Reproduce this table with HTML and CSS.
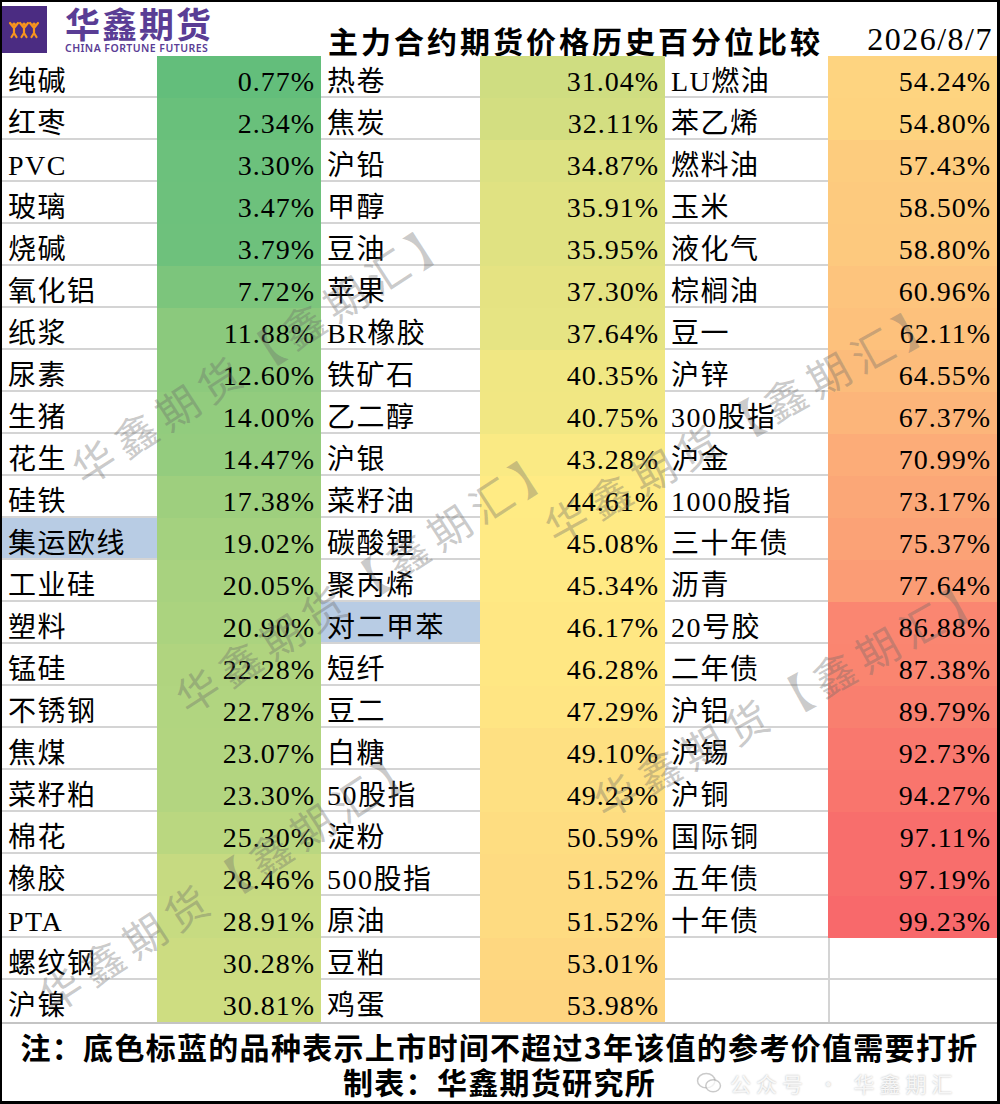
FILE: index.html
```html
<!DOCTYPE html>
<html lang="zh-CN">
<head>
<meta charset="utf-8">
<title>主力合约期货价格历史百分位比较</title>
<link rel="stylesheet" href="styles.css">
</head>
<body>
<div class="sheet">
  <header class="head">
    <div class="brand">
      <svg class="brand-mark" viewBox="0 0 45 47" width="45" height="47" aria-hidden="true">
        <rect width="45" height="47" fill="#4b2c82"/>
        <g fill="none" stroke="#f7941d" stroke-width="2.2" stroke-linecap="round" stroke-linejoin="round">
          <path d="M8 17 L12 22 L16 17 M12 22 L12 27 M12 27 L9.5 31 M12 27 L14.5 31"/>
          <path d="M18 17 L22 22 L26 17 M22 22 L22 27 M22 27 L19.5 31 M22 27 L24.5 31"/>
          <path d="M28 17 L32 22 L36 17 M32 22 L32 27 M32 27 L29.5 31 M32 27 L34.5 31"/>
        </g>
        <g fill="#f7941d">
          <circle cx="12" cy="18.2" r="1.8"/>
          <circle cx="22" cy="18.2" r="1.8"/>
          <circle cx="32" cy="18.2" r="1.8"/>
        </g>
      </svg>
      <div class="brand-text">
        <div class="brand-cn">华鑫期货</div>
        <div class="brand-en">CHINA FORTUNE FUTURES</div>
      </div>
    </div>
    <h1 class="title">主力合约期货价格历史百分位比较</h1>
    <div class="date">2026/8/7</div>
  </header>

  <div class="grid">
    <div class="name">纯碱</div><div class="val lo" style="--v:0.77">0.77%</div><div class="name">热卷</div><div class="val lo" style="--v:31.04">31.04%</div><div class="name">LU燃油</div><div class="val hi" style="--v:54.24">54.24%</div>
    <div class="name">红枣</div><div class="val lo" style="--v:2.34">2.34%</div><div class="name">焦炭</div><div class="val lo" style="--v:32.11">32.11%</div><div class="name">苯乙烯</div><div class="val hi" style="--v:54.80">54.80%</div>
    <div class="name">PVC</div><div class="val lo" style="--v:3.30">3.30%</div><div class="name">沪铅</div><div class="val lo" style="--v:34.87">34.87%</div><div class="name">燃料油</div><div class="val hi" style="--v:57.43">57.43%</div>
    <div class="name">玻璃</div><div class="val lo" style="--v:3.47">3.47%</div><div class="name">甲醇</div><div class="val lo" style="--v:35.91">35.91%</div><div class="name">玉米</div><div class="val hi" style="--v:58.50">58.50%</div>
    <div class="name">烧碱</div><div class="val lo" style="--v:3.79">3.79%</div><div class="name">豆油</div><div class="val lo" style="--v:35.95">35.95%</div><div class="name">液化气</div><div class="val hi" style="--v:58.80">58.80%</div>
    <div class="name">氧化铝</div><div class="val lo" style="--v:7.72">7.72%</div><div class="name">苹果</div><div class="val lo" style="--v:37.30">37.30%</div><div class="name">棕榈油</div><div class="val hi" style="--v:60.96">60.96%</div>
    <div class="name">纸浆</div><div class="val lo" style="--v:11.88">11.88%</div><div class="name">BR橡胶</div><div class="val lo" style="--v:37.64">37.64%</div><div class="name">豆一</div><div class="val hi" style="--v:62.11">62.11%</div>
    <div class="name">尿素</div><div class="val lo" style="--v:12.60">12.60%</div><div class="name">铁矿石</div><div class="val lo" style="--v:40.35">40.35%</div><div class="name">沪锌</div><div class="val hi" style="--v:64.55">64.55%</div>
    <div class="name">生猪</div><div class="val lo" style="--v:14.00">14.00%</div><div class="name">乙二醇</div><div class="val lo" style="--v:40.75">40.75%</div><div class="name">300股指</div><div class="val hi" style="--v:67.37">67.37%</div>
    <div class="name">花生</div><div class="val lo" style="--v:14.47">14.47%</div><div class="name">沪银</div><div class="val lo" style="--v:43.28">43.28%</div><div class="name">沪金</div><div class="val hi" style="--v:70.99">70.99%</div>
    <div class="name">硅铁</div><div class="val lo" style="--v:17.38">17.38%</div><div class="name">菜籽油</div><div class="val lo" style="--v:44.61">44.61%</div><div class="name">1000股指</div><div class="val hi" style="--v:73.17">73.17%</div>
    <div class="name new">集运欧线</div><div class="val lo" style="--v:19.02">19.02%</div><div class="name">碳酸锂</div><div class="val hi" style="--v:45.08">45.08%</div><div class="name">三十年债</div><div class="val hi" style="--v:75.37">75.37%</div>
    <div class="name">工业硅</div><div class="val lo" style="--v:20.05">20.05%</div><div class="name">聚丙烯</div><div class="val hi" style="--v:45.34">45.34%</div><div class="name">沥青</div><div class="val hi" style="--v:77.64">77.64%</div>
    <div class="name">塑料</div><div class="val lo" style="--v:20.90">20.90%</div><div class="name new">对二甲苯</div><div class="val hi" style="--v:46.17">46.17%</div><div class="name">20号胶</div><div class="val hi" style="--v:86.88">86.88%</div>
    <div class="name">锰硅</div><div class="val lo" style="--v:22.28">22.28%</div><div class="name">短纤</div><div class="val hi" style="--v:46.28">46.28%</div><div class="name">二年债</div><div class="val hi" style="--v:87.38">87.38%</div>
    <div class="name">不锈钢</div><div class="val lo" style="--v:22.78">22.78%</div><div class="name">豆二</div><div class="val hi" style="--v:47.29">47.29%</div><div class="name">沪铝</div><div class="val hi" style="--v:89.79">89.79%</div>
    <div class="name">焦煤</div><div class="val lo" style="--v:23.07">23.07%</div><div class="name">白糖</div><div class="val hi" style="--v:49.10">49.10%</div><div class="name">沪锡</div><div class="val hi" style="--v:92.73">92.73%</div>
    <div class="name">菜籽粕</div><div class="val lo" style="--v:23.30">23.30%</div><div class="name">50股指</div><div class="val hi" style="--v:49.23">49.23%</div><div class="name">沪铜</div><div class="val hi" style="--v:94.27">94.27%</div>
    <div class="name">棉花</div><div class="val lo" style="--v:25.30">25.30%</div><div class="name">淀粉</div><div class="val hi" style="--v:50.59">50.59%</div><div class="name">国际铜</div><div class="val hi" style="--v:97.11">97.11%</div>
    <div class="name">橡胶</div><div class="val lo" style="--v:28.46">28.46%</div><div class="name">500股指</div><div class="val hi" style="--v:51.52">51.52%</div><div class="name">五年债</div><div class="val hi" style="--v:97.19">97.19%</div>
    <div class="name">PTA</div><div class="val lo" style="--v:28.91">28.91%</div><div class="name">原油</div><div class="val hi" style="--v:51.52">51.52%</div><div class="name">十年债</div><div class="val hi" style="--v:99.23">99.23%</div>
    <div class="name">螺纹钢</div><div class="val lo" style="--v:30.28">30.28%</div><div class="name">豆粕</div><div class="val hi" style="--v:53.01">53.01%</div><div class="name"></div><div class="blank"></div>
    <div class="name end">沪镍</div><div class="val lo" style="--v:30.81">30.81%</div><div class="name end">鸡蛋</div><div class="val hi" style="--v:53.98">53.98%</div><div class="name end"></div><div class="blank end"></div>
  </div>

  <footer class="foot">
    <p class="foot-line">注：底色标蓝的品种表示上市时间不超过3年该值的参考价值需要打折</p>
    <p class="foot-line">制表：华鑫期货研究所</p>
  </footer>

  <div class="wm w1">华鑫期货【鑫期汇】</div>
  <div class="wm w2">华鑫期货【鑫期汇】</div>
  <div class="wm w3">华鑫期货【鑫期汇】</div>
  <div class="wm w4">华鑫期货【鑫期汇】</div>
  <div class="wm w5">华鑫期货【鑫期汇】</div>

  <div class="wechat">
    <svg class="wechat-icon" viewBox="0 0 28 24" width="26" height="22" aria-hidden="true">
      <g fill="none" stroke="rgba(150,150,150,0.5)" stroke-width="1.6">
        <ellipse cx="11" cy="9.5" rx="9.5" ry="7.8"/>
        <ellipse cx="18.5" cy="15" rx="8" ry="6.5" fill="rgba(255,255,255,0.7)"/>
      </g>
    </svg>
    <span class="wechat-text">公众号 · 华鑫期汇</span>
  </div>
</div>
</body>
</html>
```

FILE: styles.css
```css
html, body {
  margin: 0;
  padding: 0;
  background: #ffffff;
}

.sheet {
  position: relative;
  box-sizing: border-box;
  width: 1000px;
  height: 1104px;
  border-style: solid;
  border-color: #000000;
  border-width: 2px 3px 3px 2px;
  overflow: hidden;
  background: #ffffff;
  font-family: "Liberation Serif", "Noto Sans CJK SC", serif;
  color: #000000;
}

/* ---------- header ---------- */
.head {
  display: flex;
  align-items: flex-start;
  height: 54px;
}

.brand {
  display: flex;
  align-items: flex-start;
  width: 326px;
  flex: none;
}

.brand-mark {
  display: block;
  margin-top: 4px;
  flex: none;
}

.brand-text {
  margin-left: 18px;
  color: #5a3d95;
  font-family: "Noto Sans CJK SC", "Noto Sans", sans-serif;
}

.brand-cn {
  font-size: 35px;
  font-weight: 700;
  line-height: 37px;
  letter-spacing: 2px;
  margin-top: 2px;
}

.brand-en {
  font-family: "Noto Sans", "Liberation Sans", sans-serif;
  font-size: 10.5px;
  font-weight: 600;
  line-height: 12px;
  letter-spacing: 0.45px;
  margin-top: 1px;
  white-space: nowrap;
}

.title {
  margin: 21px 0 0 0;
  font-family: "Noto Sans CJK SC", sans-serif;
  font-size: 30px;
  font-weight: 700;
  line-height: 34px;
  letter-spacing: 3px;
  white-space: nowrap;
}

.date {
  margin: 20px 4px 0 auto;
  font-family: "Liberation Serif", serif;
  font-size: 32px;
  line-height: 34px;
  letter-spacing: 1.5px;
}

/* ---------- grid ---------- */
.grid {
  display: grid;
  grid-template-columns: 155px 164px 159px 185px 163px 169px;
  grid-auto-rows: 42px;
}

.name,
.val,
.blank {
  box-sizing: border-box;
  font-size: 28px;
  line-height: 40px;
  padding-top: 6px;
  white-space: nowrap;
  overflow: visible;
}

.name {
  padding-left: 6px;
  border-bottom: 2px solid #d4d4d4;
  letter-spacing: 1.5px;
}

.name.new {
  background: #b8cce4;
}

.name.end,
.blank.end {
  border-bottom: 0;
}

.blank {
  border-left: 2px solid #d4d4d4;
  border-bottom: 2px solid #d4d4d4;
}

.val {
  text-align: right;
  padding-right: 6px;
  letter-spacing: 1px;
}

/* 3-colour scale: green (min 0.77) -> yellow (median 44.61) -> red (max 99.23) */
.val.lo {
  --t: calc((var(--v) - 0.77) / 43.84);
  background: rgb(calc(99 + 156 * var(--t)), calc(190 + 45 * var(--t)), calc(123 + 9 * var(--t)));
}

.val.hi {
  --t: calc((var(--v) - 44.61) / 54.62);
  background: rgb(calc(255 - 7 * var(--t)), calc(235 - 130 * var(--t)), calc(132 - 25 * var(--t)));
}

/* ---------- footer ---------- */
.foot {
  border-top: 2px solid #c4c4c4;
  padding-top: 5px;
  text-align: center;
  font-family: "Noto Sans CJK SC", sans-serif;
  font-weight: 700;
  font-size: 30px;
}

.foot-line {
  margin: 0;
  line-height: 35px;
  letter-spacing: 1.3px;
  white-space: nowrap;
}

/* ---------- watermarks ---------- */
.wm {
  position: absolute;
  font-family: "Noto Sans CJK SC", sans-serif;
  font-size: 42px;
  line-height: 42px;
  letter-spacing: 8px;
  color: rgba(105, 105, 105, 0.36);
  white-space: nowrap;
  transform-origin: 0 50%;
  pointer-events: none;
}

.w1 { left: 73px; top: 449px; transform: rotate(-33deg); }
.w2 { left: 177px; top: 678px; transform: rotate(-33deg); }
.w3 { left: 40px; top: 977px; transform: rotate(-33deg); }
.w4 { left: 545px; top: 506px; transform: rotate(-29deg); }
.w5 { left: 594px; top: 781px; transform: rotate(-29deg); }

.wechat {
  position: absolute;
  left: 694px;
  top: 1066px;
  display: flex;
  align-items: center;
  gap: 8px;
}

.wechat-text {
  font-family: "Noto Sans CJK SC", sans-serif;
  font-size: 21px;
  letter-spacing: 5px;
  color: rgba(255, 255, 255, 0.85);
  text-shadow: 0 0 2px rgba(0, 0, 0, 0.3);
}
```
